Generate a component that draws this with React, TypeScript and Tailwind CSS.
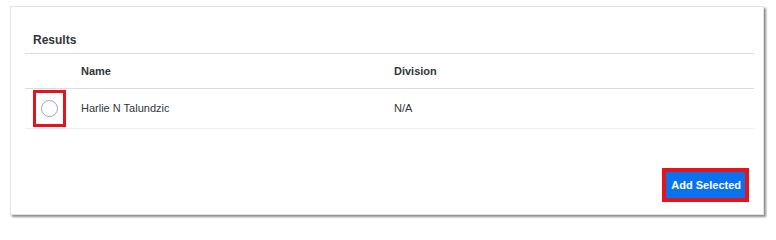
import React from "react";

export default function App() {
  return (
    <div className="w-[776px] h-[229px] bg-white relative" style={{ fontFamily: '"Liberation Sans", Arial, sans-serif' }}>
      <div className="absolute left-[10px] top-[6px] w-[754px] h-[209px] bg-white border border-[#e3e3e3] shadow-[2px_2px_2px_rgba(0,0,0,0.45)] flex flex-col pl-[14px] pr-[9px]">
        <div className="h-[47px] flex items-end pb-[5px] pl-[8px] border-b border-[#d9dde3]">
          <span className="text-[12px] font-bold text-[#32363a] leading-[16px]">Results</span>
        </div>
        <div className="h-[35px] flex items-center border-b border-[#d9dde3] text-[11px] font-bold text-[#32363a]">
          <div className="w-[56px]" />
          <div className="w-[313px]">Name</div>
          <div>Division</div>
        </div>
        <div className="h-[40px] flex items-center border-b border-[#eceef1] text-[11px] text-[#32363a]">
          <div className="w-[56px] flex items-center">
            <div className="ml-[8px] w-[33px] h-[37px] border-[3px] border-[#e5141c] flex items-center justify-center">
              <div className="w-[17px] h-[17px] rounded-full border border-[#9aa5b1] bg-white" />
            </div>
          </div>
          <div className="w-[313px]">Harlie N Talundzic</div>
          <div>N/A</div>
        </div>
        <div className="flex-1 flex items-end justify-end pb-[12px] pr-[5px]">
          <div className="border-[4px] border-[#e5141c] flex">
            <div className="bg-[#0a72ee] text-white text-[11px] font-bold pl-[5px] pr-[4px] h-[26px] flex items-center">Add Selected</div>
          </div>
        </div>
      </div>
    </div>
  );
}
